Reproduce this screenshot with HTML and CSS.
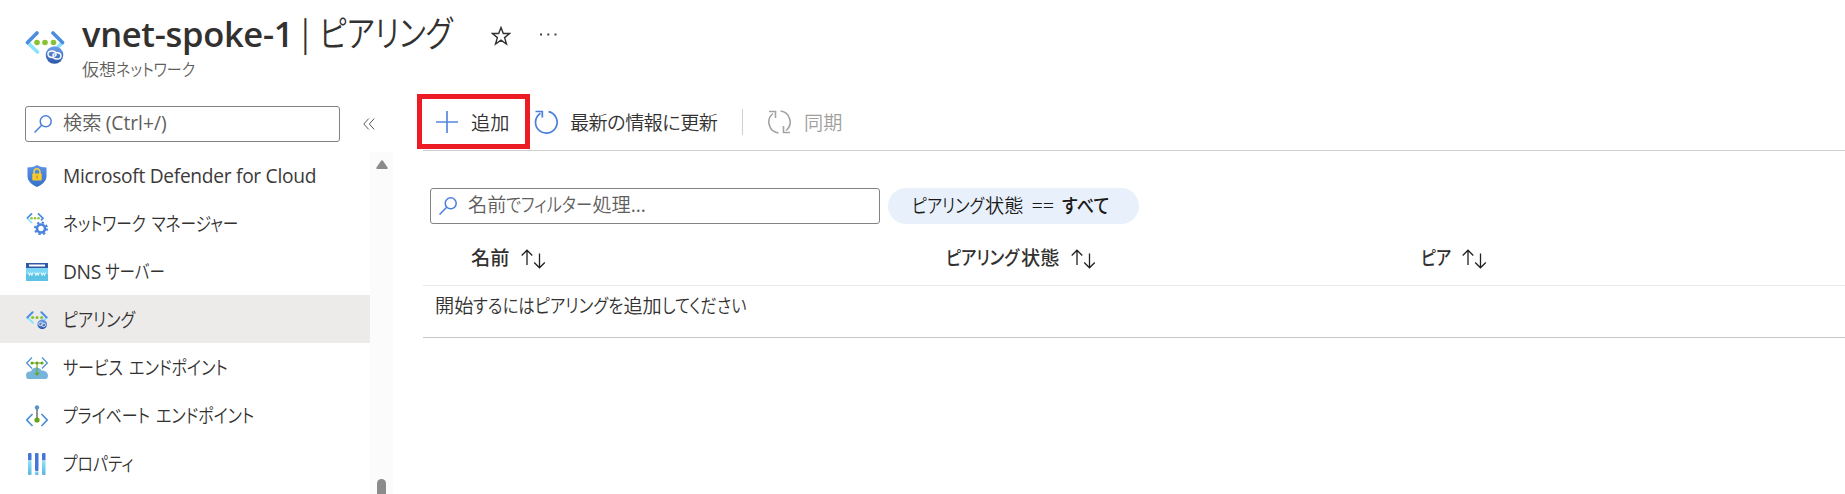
FILE: index.html
```html
<!DOCTYPE html>
<html lang="ja">
<head>
<meta charset="utf-8">
<title>vnet-spoke-1 | ピアリング</title>
<link rel="stylesheet" href="styles.css">
</head>
<body>
<svg class="defs" width="0" height="0">
  <defs>
    <linearGradient id="ball" x2="0" y2="1"><stop offset="0" stop-color="#6f9fea"/><stop offset="1" stop-color="#2c56a8"/></linearGradient>
    <linearGradient id="shieldfill" x2="0" y2="1"><stop stop-color="#5b93ea"/><stop offset="1" stop-color="#356fcb"/></linearGradient>
    <linearGradient id="tube" x2="0" y2="1"><stop stop-color="#8be6ff"/><stop offset="1" stop-color="#5bb4d8"/></linearGradient>
    <symbol id="peering" viewBox="0 0 40 34">
      <g fill="none" stroke-width="3.6" stroke-linecap="round">
        <path d="M3 13 12.500 22" stroke="#86e4ff"/><path d="M37 13 30 20" stroke="#86e4ff"/>
        <path d="M2.500 12.500 12 3M28 3l9.500 9.500" stroke="#4b8de0"/>
      </g>
      <g fill="#86c232"><circle cx="12" cy="12.500" r="2.800"/><circle cx="20" cy="12.500" r="2.800"/><circle cx="28.500" cy="12.500" r="2.800"/></g>
      <circle cx="29.500" cy="25" r="8.800" fill="url(#ball)"/>
      <g fill="none" stroke="#fff" stroke-width="1.400"><path d="M28 27.500c-4 0-5-2-5-3.500 0-2 2-3 4-3s4 1.200 4 3.200c0 1-.6 2-1.800 2"/><path d="M31 22.500c4 0 5 2 5 3.500 0 2-2 3-4 3s-4-1.200-4-3.200c0-1 .6-2 1.800-2"/></g>
    </symbol>
    <symbol id="search" viewBox="0 0 18 18"><g fill="none" stroke="#4b7fdc" stroke-width="1.500"><circle cx="11.700" cy="6.300" r="5.500"/><path d="M7.700 10.300.5 17.500"/></g></symbol>
    <symbol id="sort" viewBox="0 0 25 20"><path d="M6 16V1.500M.7 6.500 6 1.200l5.300 5.300M18.500 4.500v14M13.200 13.500l5.300 5.300 5.300-5.300" fill="none" stroke="#222" stroke-width="1.300"/></symbol>
  </defs>
</svg>

<header class="header">
  <svg class="header-icon" viewBox="0 0 40 34"><use href="#peering"/></svg>
  <div>
    <div class="title-row">
      <h1 class="title">vnet-spoke-1</h1><span class="title-bar">|</span><span class="title-page"><span class="kana k-title">ピアリング</span></span>
      <svg class="star" viewBox="0 0 20 20"><path d="M10 1.500 12.300 7.500H18.600L13.600 11.600 15.500 18 10 14.200 4.500 18 6.400 11.600 1.400 7.500H7.700Z" fill="none" stroke="#323130" stroke-width="1.400"/></svg>
      <svg class="more" viewBox="0 0 18 3"><path d="M0 .5h2v2H0zM7.300.5h2v2h-2zM14.500.5h2v2h-2z" fill="#444"/></svg>
    </div>
    <div class="subtitle">仮想<span class="kana k-sub">ネットワーク</span></div>
  </div>
</header>

<div class="layout">
  <aside class="sidebar">
    <div class="side-search">
      <div class="field"><svg class="search-icon"><use href="#search"/></svg><span>検索 <span class="latin k-ctrl">(Ctrl+/)</span></span></div>
      <svg class="collapse" viewBox="0 0 12 12"><path d="M5.700.6.800 6l4.900 5.400M11.200.6 6.300 6l4.900 5.400" fill="none" stroke="#555" stroke-width="1"/></svg>
    </div>
    <div class="nav-wrap">
      <nav class="nav">
        <a class="item"><svg class="icon" viewBox="0 0 22 22"><path d="M11 0C8 2 5 2.400 1.500 2.400V11c0 5 4 8.500 9.500 11 5.500-2.500 9.500-6 9.500-11V2.400C17 2.400 14 2 11 0Z" fill="url(#shieldfill)"/><path d="M8 9V7a3 3.200 0 0 1 6 0v2" fill="none" stroke="#f6d33c" stroke-width="1.500"/><rect x="6.300" y="8.500" width="9.400" height="7" rx=".7" fill="#f5c92f"/><path d="M11 10.500v3" stroke="#b98500" stroke-width="1"/></svg><span class="latin k-defender">Microsoft Defender for Cloud</span></a>
        <a class="item"><svg class="icon" viewBox="0 0 22 22"><g fill="none" stroke-width="1.700"><path d="M1 5l5 5" stroke="#86e4ff"/><path d="M1 5.300 6 .3M12 .3l5 5-2 2" stroke="#4b8de0"/></g><g fill="#86c232"><circle cx="5.500" cy="5.300" r="1.200"/><circle cx="9" cy="5.300" r="1.200"/><circle cx="12.500" cy="5.300" r="1.200"/></g><circle cx="15" cy="15.500" r="4" fill="none" stroke="#4a83da" stroke-width="2.600"/><circle cx="15" cy="15.500" r="6" fill="none" stroke="#4a83da" stroke-width="2" stroke-dasharray="2.300 2.412"/></svg><span class="kana k-manager">ネットワーク マネージャー</span></a>
        <a class="item"><svg class="icon" viewBox="0 0 22 22"><path d="M0 2h22v18H0z" fill="#7bd7f5"/><path d="M0 13h22v7H0z" fill="#5cc3e4"/><path d="M0 2h22v5H0z" fill="#3158a5"/><path d="M3 3.500h16v2H3z" fill="#fff"/><path d="M2.500 11.500l1 3 1.200-2.700 1.200 2.700 1-3M8.800 11.500l1 3 1.200-2.700 1.200 2.700 1-3M15.100 11.500l1 3 1.200-2.700 1.200 2.700 1-3" fill="none" stroke="#fff" stroke-width=".9"/></svg><span><span class="latin">DNS</span> <span class="kana k-dns">サーバー</span></span></a>
        <a class="item selected"><svg class="icon" viewBox="0 0 40 34"><use href="#peering"/></svg><span class="kana k-peer">ピアリング</span></a>
        <a class="item"><svg class="icon" viewBox="0 0 22 22"><g fill="none" stroke="#4f91cf" stroke-width="1.200"><path d="M6 .5.700 6 6 11.500M16 .5 21.300 6 16 11.500"/></g><path d="M4 22.500a4 4 0 0 1 0-8h1c1-4.500 8-5.500 10.500-1 3.500 0 6.500 2 6.500 5 0 2.500-1.500 4-4 4Z" fill="#75b5dc"/><path d="M11 6v12M6 6h10M8.800 15.800l2.200 2.200 2.200-2.200" stroke="#63a615" stroke-width="1.100" fill="none"/><g fill="#63a615"><circle cx="6" cy="6" r="1.500"/><circle cx="11" cy="6" r="1.500"/><circle cx="16" cy="6" r="1.500"/></g></svg><span class="kana k-service">サービス エンドポイント</span></a>
        <a class="item"><svg class="icon" viewBox="0 0 22 22"><g fill="none" stroke="#4f91cf" stroke-width="1.700"><path d="M6.500 9 .8 15l5.700 6M15.500 9l5.700 6-5.700 6"/></g><path d="M11 3v11" stroke="#777" stroke-width="1.600"/><circle cx="11" cy="2.500" r="2.200" fill="#5594cc"/><circle cx="11" cy="15" r="2.600" fill="#63a615"/></svg><span class="kana k-private">プライベート エンドポイント</span></a>
        <a class="item"><svg class="icon" viewBox="0 0 22 22"><g fill="url(#tube)"><rect x="2" y="7" width="3.500" height="15" rx="1"/><rect x="16" y="7" width="3.500" height="15" rx="1"/><rect x="9" y="18" width="3.500" height="4" rx="1"/></g><g fill="#4377d5"><rect x="2" width="3.500" height="7.500" rx="1"/><rect x="16" width="3.500" height="7.500" rx="1"/><rect x="9" width="3.500" height="18" rx="1"/></g><path d="M2 8h3.500M16 8h3.500M9 18.500h3.500" stroke="#ddd"/></svg><span class="kana k-prop">プロパティ</span></a>
      </nav>
      <div class="scrollbar"><svg width="12" height="9" viewBox="0 0 12 9"><path d="M5 .8q1-1.200 2 0l4.700 7q.3 1.200-.9 1.200H1.200Q0 9 .3 7.800Z" fill="#8b8b8b"/></svg><div class="thumb"></div></div>
    </div>
  </aside>

  <main class="main">
    <div class="toolbar">
      <button class="tool add"><svg width="22" height="22" viewBox="0 0 22 22"><path d="M11 0v22M0 11h22" stroke="#5788dd" stroke-width="1.700"/></svg><span>追加</span></button>
      <button class="tool refresh"><svg width="25" height="26" viewBox="0 0 25 26"><path d="M14.500 2.700A10.800 10.800 0 1 1 6.500 4.200M1.500 2.500h6.800v6" fill="none" stroke="#4b7fdc" stroke-width="1.700"/></svg><span>最新の情報に更新</span></button>
      <span class="divider"></span>
      <button class="tool sync"><svg width="25" height="26" viewBox="0 0 25 26"><path d="M11.500 24A11 11 0 0 1 6 4.500M2 2.500h6.500v6.500M13.500 2A11 11 0 0 1 19 21.500M23 23.500h-6.500v-6.500" fill="none" stroke="#a3a3a3" stroke-width="1.600"/></svg><span>同期</span></button>
    </div>
    <div class="filters">
      <div class="field filter-field"><svg class="search-icon"><use href="#search"/></svg><span>名前<span class="kana k-filter">でフィルター</span>処理<span class="latin">...</span></span></div>
      <div class="pill"><span><span class="kana k-peer">ピアリング</span>状態</span><span class="eq">==</span><b class="kana k-all">すべて</b></div>
    </div>
    <div class="thead">
      <div class="th"><span>名前</span><svg class="sort"><use href="#sort"/></svg></div>
      <div class="th"><span><span class="kana k-head">ピアリング</span>状態</span><svg class="sort"><use href="#sort"/></svg></div>
      <div class="th"><span class="kana k-pia">ピア</span><svg class="sort"><use href="#sort"/></svg></div>
    </div>
    <div class="empty">開始<span class="kana k-msg1">するにはピアリングを</span>追加<span class="kana k-msg2">してください</span></div>
  </main>
</div>
</body>
</html>
```
FILE: styles.css
```css
* { box-sizing: border-box; }
body {
  margin: 0; height: 494px; overflow: hidden; background: #fff; color: #323130;
  font: 350 19.2px/28px "Noto Sans CJK JP", "Open Sans", sans-serif;
  white-space: nowrap;
}
.defs { position: absolute; }
svg { display: block; flex: none; }
.latin { font-family: "Open Sans", sans-serif; font-weight: 380; font-size: 19.2px; letter-spacing: -.3px; color: #3b3a39; }
.field .latin { color: inherit; letter-spacing: 0; }
.k-defender { margin-top: 2px; }

/* Proportional kana, condensed to a fixed advance per run */
.kana { display: inline-block; font-feature-settings: "palt"; transform: scaleX(.84); transform-origin: 0 50%; }
.k-title { width: 134px; }
.k-sub { width: 80px; transform: scaleX(.88); }
.k-manager { transform: scaleX(.815); word-spacing: 3px; }
.k-dns { width: 60px; transform: scaleX(.81); }
.k-peer { width: 73px; }
.k-service { transform: scaleX(.836); word-spacing: 3px; }
.k-private { transform: scaleX(.833); word-spacing: 3px; }
.k-prop { transform: scaleX(.825); }
.k-head { width: 75px; transform: scaleX(.85); }
.k-filter { width: 86px; transform: scaleX(.845); }
.k-pia { width: 29px; }
.k-all { width: 50px; transform: scaleX(.9); }
.k-msg1 { width: 150px; transform: scaleX(.855); }
.k-msg2 { width: 86px; }

.header { height: 106px; padding: 8px 0 0 25px; display: flex; gap: 17px; }
.header-icon { width: 40px; height: 34px; margin-top: 22px; }
.title-row { display: flex; height: 48px; align-items: center; }
.title { margin: 4px 0 0; font: 600 34.5px/48px "Open Sans", sans-serif; letter-spacing: -.3px; width: 214px; }
.title-bar { width: 24px; padding-left: 5px; font-size: 33px; }
.title-page { font-size: 36px; line-height: 48px; width: 172px; margin: -2px 0 0 -1px; }
.title-page .kana { transform: scaleX(.83); }
.star { width: 20px; height: 20px; margin-top: 8px; }
.more { width: 18px; height: 3px; margin: 5px 0 0 29px; }
.subtitle { font-size: 17px; line-height: 26px; color: #605e5c; }

.layout { display: flex; height: 388px; }
.sidebar { width: 393px; }
.side-search { display: flex; align-items: center; padding-left: 25px; }
.field { width: 315px; height: 36px; border: 1px solid #858381; border-radius: 3px; display: flex; align-items: center; padding: 0 0 3px 8px; gap: 11px; color: #605e5c; }
.search-icon { width: 18px; height: 18px; margin-top: 2px; }
.collapse { width: 12px; height: 12px; margin-left: 23px; }
.nav-wrap { display: flex; height: 343px; margin-top: 9px; }
.nav { width: 370px; }
.item { height: 48px; padding: 0 0 0 26px; display: flex; align-items: center; gap: 15px; }
.item.selected { background: #edebe9; }
.icon { width: 22px; height: 22px; margin-top: 1px; }
.scrollbar { width: 23px; background: #fbfbfb; padding-top: 8px; display: flex; flex-direction: column; align-items: center; justify-content: space-between; margin-top: 1px; }
.thumb { width: 9px; height: 15px; border-radius: 5px 5px 0 0; background: #8b8b8b; }

.main { flex: 1; margin-left: 24px; margin-top: -12px; }
.toolbar { height: 57px; display: flex; align-items: flex-start; position: relative; }
.toolbar::after { content: ""; position: absolute; left: 6px; right: 0; bottom: 0; height: 1px; background: #d2d0ce; }
.tool { border: 0; background: none; padding: 0; font: inherit; color: inherit; display: flex; align-items: center; height: 55px; }
.add { width: 113px; border: 5px solid #ed1c24; padding-left: 14px; gap: 13px; }
.refresh { margin-left: 4px; gap: 11px; width: 208px; letter-spacing: -.8px; }
.divider { width: 1px; height: 26px; margin-top: 15px; background: #d2d0ce; }
.sync { margin-left: 24px; gap: 12px; color: #a19f9d; }
.filters { display: flex; gap: 8px; margin: 37px 0 0 13px; }
.filter-field { width: 450px; }
.pill { width: 251px; height: 36px; padding: 0 0 3px 24px; border-radius: 18px; background: #e8f1fb; display: flex; align-items: center; color: #1b1a19; }
.eq { margin: 2px 8px 0; font-family: "Noto Sans", sans-serif; font-weight: 350; font-size: 20px; }
.pill b { font-weight: 500; }
.thead { display: grid; grid-template-columns: 475px 475px 1fr; height: 62px; margin-left: 6px; padding-left: 48px; border-bottom: 1px solid #e8e8e8; align-items: center; font-weight: 500; }
.th { display: flex; align-items: center; gap: 12px; padding-top: 4px; }
.sort { width: 25px; height: 20px; margin-top: 4px; }
.empty { height: 52px; margin-left: 6px; padding: 5px 0 0 12px; border-bottom: 1px solid #c8c6c4; }
```
